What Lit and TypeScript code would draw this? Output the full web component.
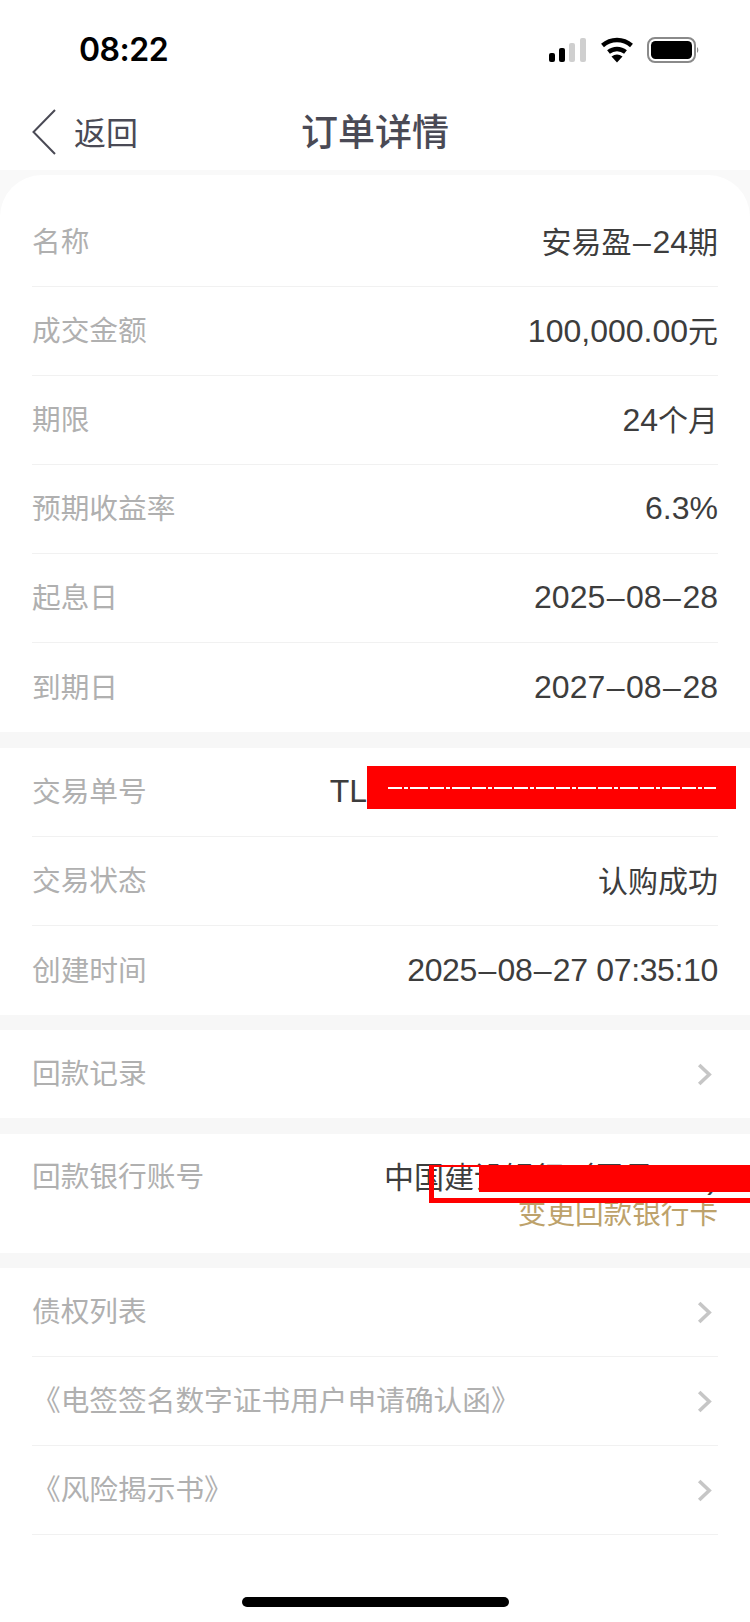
import { LitElement, html, css, svg } from "lit";
import { customElement } from "lit/decorators.js";

const chevron = html`<svg class="chev" width="15" height="23" viewBox="0 0 15 23"><path d="M2.2 2 L12.2 11.5 L2.2 21" fill="none" stroke="#c6c6c6" stroke-width="3.6"/></svg>`;

/** Latin and digits run 32px Arial-metric; CJK runs are 30px, as in the reference. */
function mixed(text: string) {
  return text.split(/([\u3000-\u9fff\uff00-\uffef]+|–)/).filter(Boolean).map((part) => {
    if (part === "–") return html`<span class="dashc">–</span>`;
    return /[\u3000-\u9fff\uff00-\uffef]/.test(part) ? html`<span class="cjk">${part}</span>` : part;
  });
}

@customElement("app-root")
export class AppRoot extends LitElement {
  static styles = css`
    :host { display: block; width: 750px; height: 1622px; background: #fff; overflow: hidden; position: relative;
      font-family: "Noto Sans CJK SC", "Liberation Sans", sans-serif; color: #333; }
    .top { background: #fff; height: 170px; display: flex; flex-direction: column; }
    .status { height: 88px; flex: none; display: flex; align-items: flex-start; justify-content: space-between; padding: 0 50px 0 79px; }
    .time { font: 600 32px/1 "Inter", "Liberation Sans", sans-serif; color: #000; margin-top: 34px; letter-spacing: -0.5px; }
    .status svg { margin-top: 36px; }
    .nav { position: relative; display: flex; align-items: center; height: 88px; flex: none; padding-left: 32px; gap: 18px; color: #4a4a55; }
    .back { font-size: 32px; line-height: 44px; margin-top: -3px; }
    .title { position: absolute; left: 0; right: 0; top: 17px; text-align: center; font-size: 37px; font-weight: 500; line-height: 50px; }
    .band { background: #f9f9f9; padding-top: 5px; }
    .card { background: #fff; }
    .first { border-radius: 42px 42px 0 0; }
    .gap { height: 16px; background: #f7f7f7; }
    .gap.s { height: 15px; }
    .row { margin: 0 32px; height: 89px; box-sizing: border-box; display: flex; align-items: center; justify-content: space-between; border-bottom: 1px solid #f1f1f1; }
    .row.lead { height: 112px; padding-top: 23px; }
    .row.last { border-bottom: none; }
    .row.short { height: 88px; }
    .label { font-size: 28.7px; color: #b0b0b0; line-height: 40px; margin-top: -4px; }
    .value { font: 400 32px/40px "Liberation Sans", "Noto Sans CJK SC", sans-serif; color: #3d3d3d; white-space: nowrap; margin-top: -2px; }
    .value.tight { letter-spacing: -0.35px; }
    .cjk { font-family: "Noto Sans CJK SC", "Liberation Sans", sans-serif; font-size: 30px; }
    .dashc { margin: 0 1.5px; }
    .bank { height: 119px; align-items: flex-start; padding-top: 23px; border-bottom: none; }
    .bank .label { margin-top: -2px; }
    .bank-v { display: flex; flex-direction: column; align-items: flex-end; }
    .bank-v .value { height: 32px; line-height: 32px; margin-top: 2px; }
    .change { font-size: 28.6px; line-height: 34px; color: #bda26b; margin-top: 4px; }
    .bar { position: absolute; left: 242px; top: 1597px; width: 267px; height: 10px; border-radius: 5px; background: #000; }
    .red { position: absolute; background: #f00; }
    .r1 { left: 367px; top: 766px; width: 369px; height: 43px; }
    .dash { position: absolute; left: 21px; right: 20px; top: 21px; height: 2px;
      background: repeating-linear-gradient(90deg, #fff 0 14px, transparent 14px 16px, #fff 16px 20px, transparent 20px 22px, #fff 22px 40px, transparent 40px 42px); }
    .r2 { left: 429px; top: 1165px; width: 321px; height: 38px; box-sizing: border-box; background: none;
      border-style: solid; border-color: #f00; border-width: 2px 0 5px 5px; }
    .r3 { left: 479px; top: 1165px; width: 271px; height: 27px; }
    .chev { flex: none; margin-right: 6px; }
    .tl { margin-right: 351px; }
  `;

  private row(label: string, value: string, cls = "", vcls = "") {
    return html`<div class="row ${cls}"><span class="label">${label}</span><span class="value ${vcls}">${mixed(value)}</span></div>`;
  }
  private link(label: string, cls = "") {
    return html`<div class="row ${cls}"><span class="label">${label}</span>${chevron}</div>`;
  }

  render() {
    return html`
      <div class="top">
        <div class="status">
          <span class="time">08:22</span>
          <svg width="151" height="28" viewBox="0 0 151 28">
            ${svg`<rect x="0" y="17" width="6" height="9" rx="2" fill="#000"/>
            <rect x="10" y="12" width="6" height="14" rx="2" fill="#000"/>
            <rect x="20" y="7" width="6" height="19" rx="2" fill="#cfcfcf"/>
            <rect x="31" y="2" width="6" height="24" rx="2" fill="#cfcfcf"/>
            <path d="M53.5 9.5 A 22 22 0 0 1 82.5 9.5 M59.5 16 A 13.5 13.5 0 0 1 76.5 16" fill="none" stroke="#000" stroke-width="4.4"/>
            <path d="M62.5 20.5 L68 26.5 L73.5 20.5 A 9 9 0 0 0 62.5 20.5 Z" fill="#000"/>
            <rect x="99" y="2" width="47" height="24" rx="7" fill="none" stroke="#8a8a8a" stroke-width="2"/>
            <rect x="102" y="5" width="41" height="18" rx="4.5" fill="#000"/>
            <path d="M148 11 a4 4 0 0 1 0 6 Z" fill="#8a8a8a"/>`}
          </svg>
        </div>
        <div class="nav">
          <svg width="24" height="46" viewBox="0 0 24 46"><path d="M23 1 L1.5 23 L23 45" fill="none" stroke="#4a4a55" stroke-width="2"/></svg>
          <span class="back">返回</span>
          <span class="title">订单详情</span>
        </div>
      </div>
      <div class="band">
        <div class="card first">
          ${this.row("名称", "安易盈–24期", "lead")}
          ${this.row("成交金额", "100,000.00元")}
          ${this.row("期限", "24个月")}
          ${this.row("预期收益率", "6.3%")}
          ${this.row("起息日", "2025–08–28")}
          ${this.row("到期日", "2027–08–28", "last")}
        </div>
      </div>
      <div class="gap"></div>
      <div class="card">
        <div class="row"><span class="label">交易单号</span><span class="value"><span class="tl">TL</span></span></div>
        ${this.row("交易状态", "认购成功")}
        ${this.row("创建时间", "2025–08–27 07:35:10", "last", "tight")}
      </div>
      <div class="gap s"></div>
      <div class="card">${this.link("回款记录", "last short")}</div>
      <div class="gap"></div>
      <div class="card">
        <div class="row bank">
          <span class="label">回款银行账号</span>
          <div class="bank-v">
            <span class="value">${mixed("中国建设银行（尾号\u00a0\u00a0\u00a0\u00a0\u00a0\u00a0)")}</span>
            <span class="change">变更回款银行卡</span>
          </div>
        </div>
      </div>
      <div class="gap s"></div>
      <div class="card">
        ${this.link("债权列表")}
        ${this.link("《电签签名数字证书用户申请确认函》")}
        ${this.link("《风险揭示书》")}
      </div>
      <div class="red r1"><div class="dash"></div></div>
      <div class="red r2"></div>
      <div class="red r3"></div>
      <div class="bar"></div>
    `;
  }
}
